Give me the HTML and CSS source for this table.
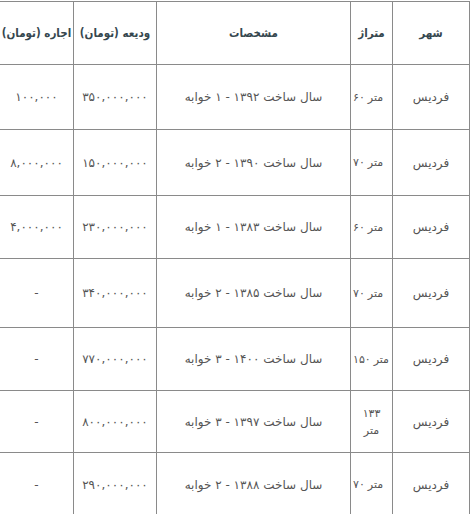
FILE: index.html
```html
<!DOCTYPE html>
<html lang="fa">
<head>
<meta charset="utf-8">
<title>فردیس</title>
<link rel="stylesheet" href="styles.css">
</head>
<body>
<div class="wrap">
<table class="rent" dir="rtl">
  <colgroup>
    <col class="c-city">
    <col class="c-size">
    <col class="c-spec">
    <col class="c-dep">
    <col class="c-rent">
  </colgroup>
  <thead>
    <tr class="r0">
      <th>شهر</th>
      <th>متراژ</th>
      <th>مشخصات</th>
      <th>ودیعه (تومان)</th>
      <th>اجاره (تومان)</th>
    </tr>
  </thead>
  <tbody>
    <tr class="r1">
      <td>فردیس</td>
      <td class="size"><div class="sz"><span>۶۰</span><span>متر</span></div></td>
      <td>سال ساخت ۱۳۹۲ - ۱ خوابه</td>
      <td>۳۵۰,۰۰۰,۰۰۰</td>
      <td>۱۰۰,۰۰۰</td>
    </tr>
    <tr class="r2">
      <td>فردیس</td>
      <td class="size"><div class="sz"><span>۷۰</span><span>متر</span></div></td>
      <td>سال ساخت ۱۳۹۰ - ۲ خوابه</td>
      <td>۱۵۰,۰۰۰,۰۰۰</td>
      <td>۸,۰۰۰,۰۰۰</td>
    </tr>
    <tr class="r3">
      <td>فردیس</td>
      <td class="size"><div class="sz"><span>۶۰</span><span>متر</span></div></td>
      <td>سال ساخت ۱۳۸۳ - ۱ خوابه</td>
      <td>۲۳۰,۰۰۰,۰۰۰</td>
      <td>۴,۰۰۰,۰۰۰</td>
    </tr>
    <tr class="r4">
      <td>فردیس</td>
      <td class="size"><div class="sz"><span>۷۰</span><span>متر</span></div></td>
      <td>سال ساخت ۱۳۸۵ - ۲ خوابه</td>
      <td>۳۴۰,۰۰۰,۰۰۰</td>
      <td>-</td>
    </tr>
    <tr class="r5">
      <td>فردیس</td>
      <td class="size"><div class="sz"><span>۱۵۰</span><span>متر</span></div></td>
      <td>سال ساخت ۱۴۰۰ - ۳ خوابه</td>
      <td>۷۷۰,۰۰۰,۰۰۰</td>
      <td>-</td>
    </tr>
    <tr class="r6">
      <td>فردیس</td>
      <td class="size"><div class="sz stack"><span>۱۳۳</span><span>متر</span></div></td>
      <td>سال ساخت ۱۳۹۷ - ۳ خوابه</td>
      <td>۸۰۰,۰۰۰,۰۰۰</td>
      <td>-</td>
    </tr>
    <tr class="r7">
      <td>فردیس</td>
      <td class="size"><div class="sz"><span>۷۰</span><span>متر</span></div></td>
      <td>سال ساخت ۱۳۸۸ - ۲ خوابه</td>
      <td>۲۹۰,۰۰۰,۰۰۰</td>
      <td>-</td>
    </tr>
  </tbody>
</table>
</div>
</body>
</html>
```
FILE: styles.css
```css
html, body {
  margin: 0;
  padding: 0;
  background: #ffffff;
}

.wrap {
  width: 471px;
  height: 514px;
  overflow: hidden;
  padding-top: 1px;
  box-sizing: border-box;
}

.rent {
  border-collapse: collapse;
  table-layout: fixed;
  width: 470px;
  margin-left: -1px;
  font-family: "DejaVu Sans", "Noto Sans", sans-serif;
  font-size: 12px;
  color: #555555;
}

.c-city { width: 77px; }
.c-size { width: 42px; }
.c-spec { width: 194px; }
.c-dep  { width: 83px; }
.c-rent { width: 74px; }

.rent th,
.rent td {
  border: 1px solid #8a8a8a;
  padding: 0 2px;
  text-align: center;
  vertical-align: middle;
}

.rent th {
  padding: 0;
  font-family: "DejaVu Sans Condensed", "DejaVu Sans", sans-serif;
  font-stretch: condensed;
  font-size: 11.5px;
  font-weight: bold;
  color: #36474f;
  white-space: nowrap;
}

.rent td.size {
  padding: 0;
  font-size: 11px;
}

.sz {
  display: flex;
  direction: ltr;
  justify-content: flex-start;
  align-items: center;
  column-gap: 3px;
  padding-left: 2px;
  white-space: nowrap;
}

.sz.stack {
  flex-direction: column;
  padding-left: 0;
  row-gap: 4px;
}

.r0 { height: 63px; }
.r1 { height: 65px; }
.r2 { height: 66px; }
.r3 { height: 63px; }
.r4 { height: 69px; }
.r5 { height: 63px; }
.r6 { height: 62px; }
.r7 { height: 64px; }
```
